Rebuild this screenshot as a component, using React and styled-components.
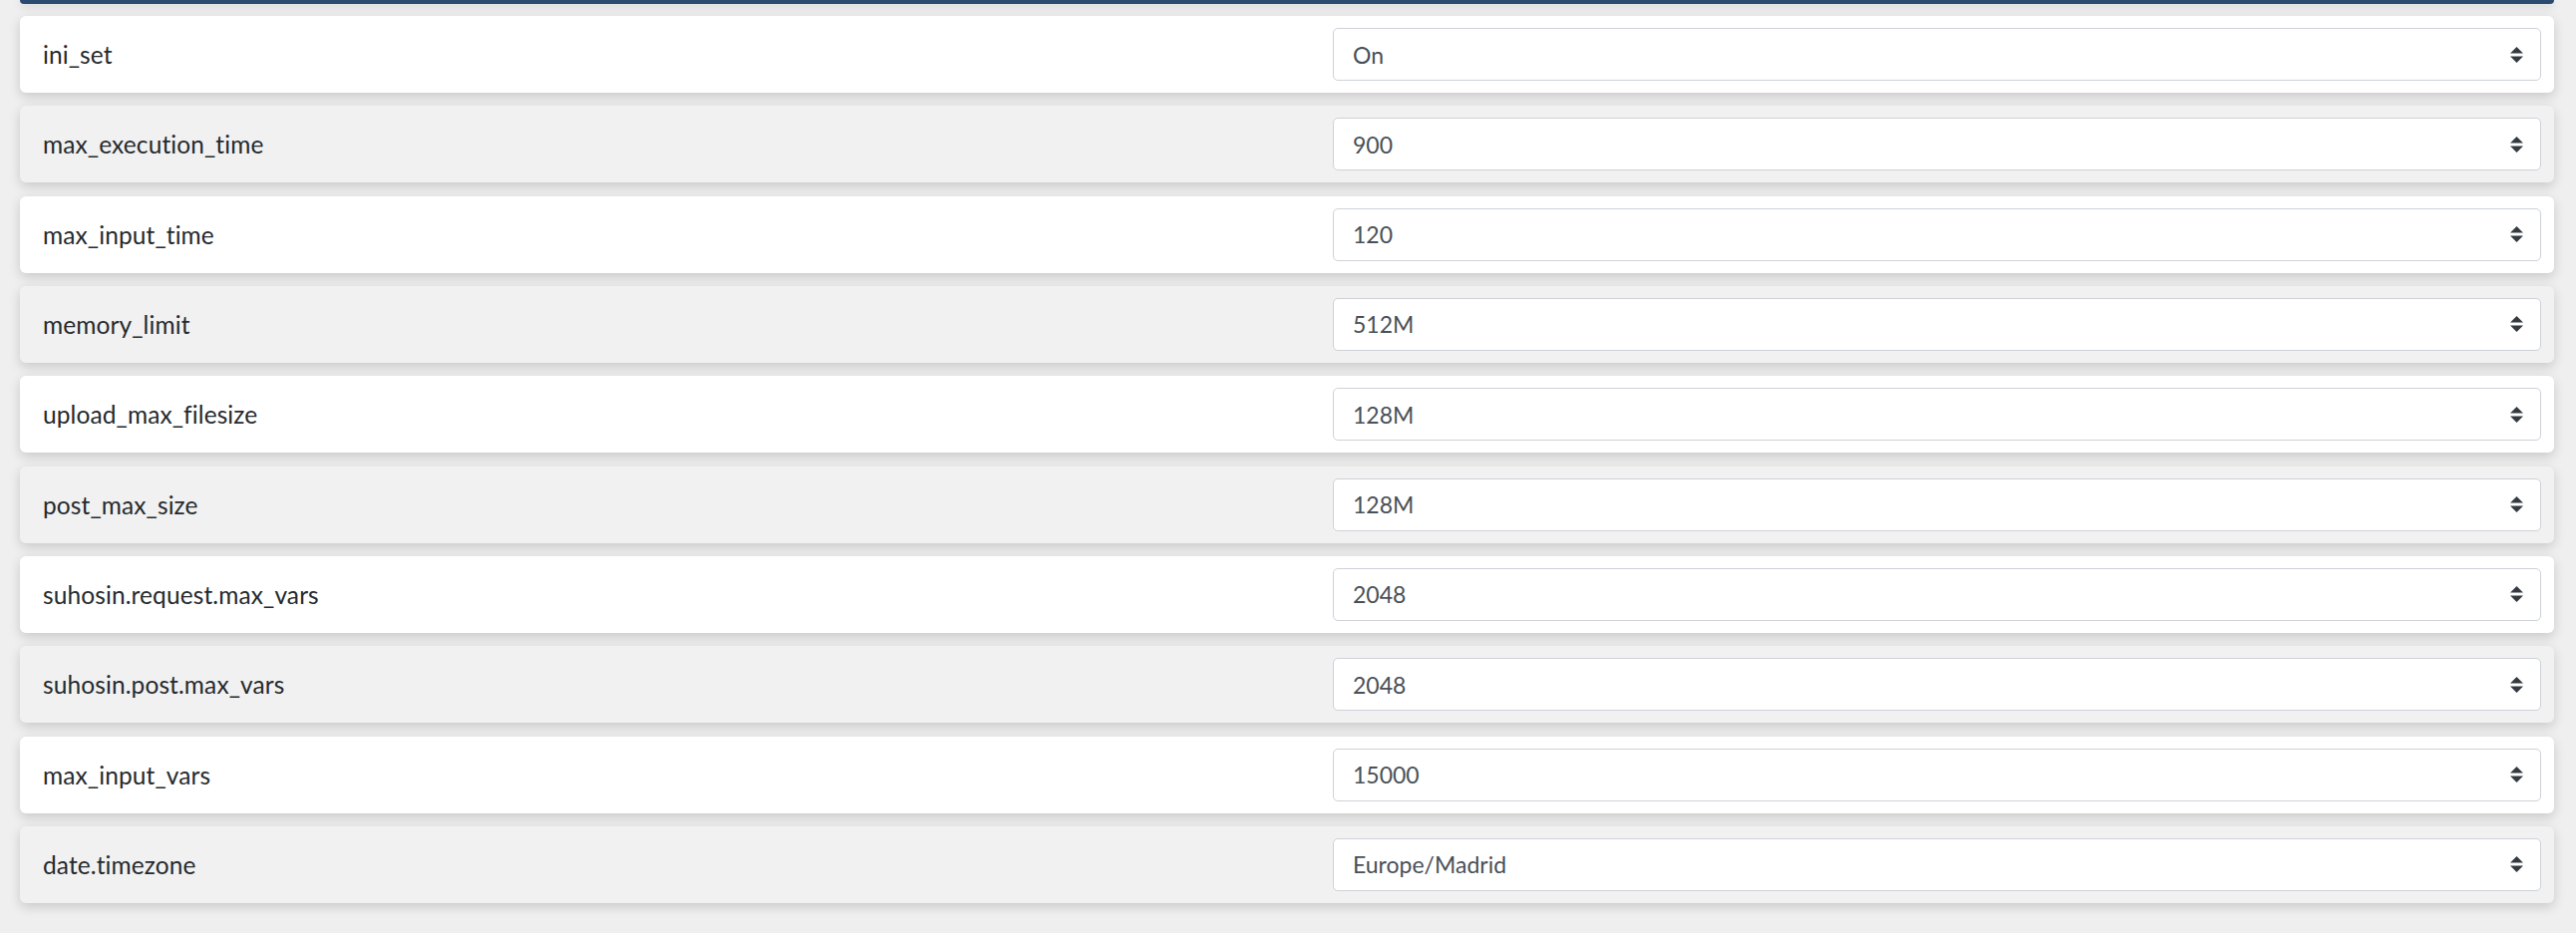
import React from "react";
import styled, { createGlobalStyle } from "styled-components";

const settings = [
  { name: "ini_set", value: "On" },
  { name: "max_execution_time", value: "900" },
  { name: "max_input_time", value: "120" },
  { name: "memory_limit", value: "512M" },
  { name: "upload_max_filesize", value: "128M" },
  { name: "post_max_size", value: "128M" },
  { name: "suhosin.request.max_vars", value: "2048" },
  { name: "suhosin.post.max_vars", value: "2048" },
  { name: "max_input_vars", value: "15000" },
  { name: "date.timezone", value: "Europe/Madrid" },
];

export default function App() {
  return (
    <>
      <GlobalStyle />
      <Page>
        <HeaderEdge />
        <List>
          {settings.map((s, i) => (
            <Row key={s.name} $striped={i % 2 === 1}>
              <Label>{s.name}</Label>
              <SelectBox>
                <span>{s.value}</span>
                <SortIcon viewBox="0 0 4 5" preserveAspectRatio="none">
                  <path fill="#343a40" d="M2 0L0 2h4zm0 5L0 3h4z" />
                </SortIcon>
              </SelectBox>
            </Row>
          ))}
        </List>
      </Page>
    </>
  );
}

const GlobalStyle = createGlobalStyle`
  html, body {
    margin: 0;
    padding: 0;
    background: #efefef;
  }
  body {
    font-family: Lato, "Noto Sans", sans-serif;
  }
`;

const Page = styled.div`
  padding: 0 22px 30px 20px;
`;

const HeaderEdge = styled.div`
  height: 4px;
  background: #2a4a6f;
  border-radius: 0 0 6px 6px;
  box-shadow: 0 3px 8px rgba(0, 0, 0, 0.15);
`;

const List = styled.div`
  display: flex;
  flex-direction: column;
  gap: 13.33px;
  margin-top: 12px;
`;

const Row = styled.div`
  display: grid;
  grid-template-columns: 1fr 1212px;
  align-items: center;
  height: 77px;
  padding: 0 13px 0 23px;
  border-radius: 6px;
  background: ${(p) => (p.$striped ? "#f1f1f1" : "#ffffff")};
  box-shadow: 0 4px 12px rgba(0, 0, 0, 0.16);
`;

const Label = styled.div`
  font-size: 24.5px;
  letter-spacing: 0.1px;
  color: #262a2e;
`;

const SelectBox = styled.div`
  display: flex;
  align-items: center;
  justify-content: space-between;
  height: 53px;
  box-sizing: border-box;
  padding: 0 17px 0 19px;
  background: #fff;
  border: 1px solid #ced2d8;
  border-radius: 5px;
  font-size: 23px;
  color: #495057;
`;

const SortIcon = styled.svg`
  width: 13px;
  height: 16px;
`;
